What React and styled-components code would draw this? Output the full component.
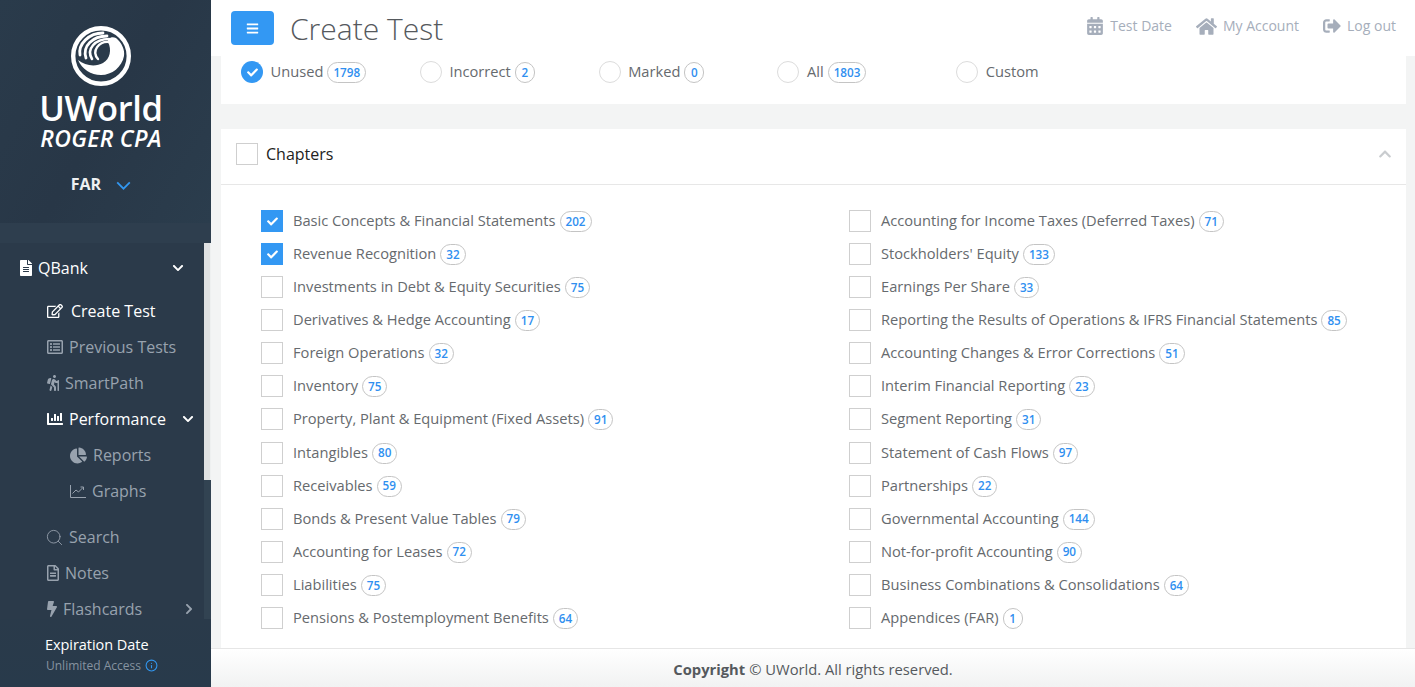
import React from "react";
import styled, { createGlobalStyle } from "styled-components";
import { FaFileAlt, FaRegEdit, FaRegListAlt, FaHiking, FaChartBar, FaChartPie, FaRegFileAlt, FaBolt, FaChevronDown, FaChevronRight, FaChevronUp, FaCalendarAlt, FaHome, FaSignOutAlt, FaCheck, FaBars } from "react-icons/fa";
import { Search, Info } from "lucide-react";

const Global = createGlobalStyle`
  html, body { margin: 0; padding: 0; height: 100%; overflow: hidden; }
  body { font-family: "Open Sans", "Liberation Sans", sans-serif; background: #f3f4f4; }
  * { box-sizing: border-box; }
  svg.w10 { width: 10px; }
  svg.w12 { width: 12px; }
  svg.w16 { width: 16px; }
`;

const Page = styled.div`display: flex; width: 1415px; height: 687px; overflow: hidden;`;

const Sidebar = styled.aside`
  width: 211px; flex: none; display: flex; flex-direction: column;
  background: linear-gradient(155deg, #2a3a4a 0%, #2b3b4b 60%, #293848 100%);
`;
const Brand = styled.div`
  height: 223px; flex: none; display: flex; flex-direction: column; align-items: center; padding: 26px 9px 0 0;
  background: linear-gradient(120deg, #2a3b4b 0%, #283747 50%, #2b3d4d 100%);
`;
const LogoName = styled.div`
  margin-top: 3px; color: #fff; font-size: 34.5px; font-weight: 600; line-height: 38px; letter-spacing: -0.3px; white-space: nowrap;
`;
const LogoSub = styled.div`
  color: #fff; font-size: 23px; font-weight: 600; font-style: italic; line-height: 22px; letter-spacing: 0.3px; white-space: nowrap;
`;
const Course = styled.div`
  margin-top: 24px; display: flex; align-items: center; gap: 15px; color: #eef0f2; font-size: 16px; font-weight: 700; line-height: 22px;
  svg { color: #3297f0; margin-top: 2px; }
`;
const Band = styled.div`height: 20px; flex: none; background: #2e3e4e;`;
const NavArea = styled.div`height: 376px; flex: none; display: flex; overflow: hidden;`;
const Nav = styled.nav`width: 204px; flex: none; padding-top: 7px; background: #2b3a4a;`;
const Scroll = styled.div`width: 7px; flex: none; background: #324352; display: flex; flex-direction: column;`;
const Thumb = styled.div`width: 7px; height: 237px; background: #dfe1e3; border-right: 1px solid #eef0f0;`;
const TopItem = styled.div`
  height: 36px; display: flex; align-items: center; padding-left: 20px; color: #fff; font-size: 16px; position: relative;
  svg.lead { margin-right: 6px; }
`;
const Item = styled.div`
  height: 36px; display: flex; align-items: center; padding-left: ${p => p.$indent || 47}px; font-size: 16px;
  color: ${p => (p.$active ? "#fff" : "#98a2ae")}; position: relative; margin-top: ${p => p.$gap || 0}px;
  svg.lead { margin-right: ${p => p.$iconGap ?? 6}px; flex: none; }
  svg.nudge { margin-left: -2px; }
`;
const Caret = styled.span`
  position: absolute; left: ${p => p.$left}px; top: 50%; transform: translateY(-50%); display: flex; color: ${p => p.$color || "#fff"};
`;
const Expire = styled.div`
  flex: 1; padding: 16px 0 0 45px; background: linear-gradient(180deg, #2a3a4a, #283a4b);
`;
const ExpireTitle = styled.div`color: #fff; font-size: 14.5px; line-height: 20px; letter-spacing: -0.05px;`;
const ExpireSub = styled.div`
  display: flex; align-items: center; gap: 4px; color: #8693a0; font-size: 12px; line-height: 21px; padding-left: 1px;
  svg { color: #3297f0; }
`;

const Main = styled.div`flex: 1; display: flex; flex-direction: column; min-width: 0;`;
const Header = styled.header`
  height: 56px; flex: none; background: #fff; display: flex; align-items: center; padding: 2px 19px 0 20px;
`;
const MenuButton = styled.button`
  width: 43px; height: 34px; border: 0; border-radius: 4px; background: #3398f3; color: #fff; display: flex; align-items: center; justify-content: center; padding: 0; margin-top: -2px;
`;
const Title = styled.h1`
  margin: 0 0 0 16px; font-size: 30px; font-weight: 300; color: #55595d; line-height: 40px;
`;
const HeaderLinks = styled.div`margin-left: auto; display: flex; align-items: center; gap: 24px; margin-top: -6px;`;
const HeaderLink = styled.a`
  display: flex; align-items: center; gap: ${p => p.$gap || 6}px; color: #a6aebb; font-size: 14px; line-height: 20px;
`;
const Content = styled.main`flex: 1; padding: 0 9px 0 10px; display: flex; flex-direction: column; overflow: hidden;`;
const ModeCard = styled.section`
  height: 48px; flex: none; background: #fff; display: flex; padding: 5px 0 0 20px;
`;
const Mode = styled.label`
  width: 178.8px; flex: none; display: flex; align-items: flex-start; color: #666a6e; font-size: 14.67px; line-height: 20px;
`;
const Radio = styled.span`
  width: 22px; height: 22px; border-radius: 50%; flex: none; margin-right: 7.6px; display: flex; align-items: center; justify-content: center; color: #fff;
  background: ${p => (p.$on ? "#3398f3" : "#fff")}; border: ${p => (p.$on ? "0" : "1px solid #dcdcdc")};
`;
const Count = styled.span`
  display: inline-flex; align-items: center; justify-content: center; height: 21px; min-width: 20px; padding: 0 5px; margin-left: 4px; margin-top: 1px;
  border: 1px solid #c4c4c4; border-radius: 11px; color: #2f8ff0; font-size: 11.7px; font-weight: 600; line-height: 1; background: #fff; flex: none;
`;
const ChapterCard = styled.section`margin-top: 25px; flex: 1; background: #fff; display: flex; flex-direction: column;`;
const CardHead = styled.div`
  height: 56px; flex: none; border-bottom: 1px solid #e7e7e7; display: flex; align-items: center; padding: 0 14px 5px 15px; color: #222; font-size: 16px;
`;
const Box = styled.span`
  width: 22px; height: 22px; flex: none; display: flex; align-items: center; justify-content: center; color: #fff;
  background: ${p => (p.$on ? "#3398f3" : "#fff")}; border: ${p => (p.$on ? "0" : "1px solid #cfcfcf")};
`;
const HeadLabel = styled.span`margin-left: 8px; flex: 1;`;
const Grid = styled.div`
  display: grid; grid-template-columns: 588px 1fr; grid-auto-rows: 33.09px; padding: 25px 0 0 40px;
`;
const Row = styled.label`display: flex; align-items: flex-start; color: #666a6e; font-size: 14.67px; line-height: 20px;`;
const RowText = styled.span`margin-left: 10px; white-space: nowrap;`;
const Footer = styled.footer`
  height: 39px; flex: none; border-top: 1px solid #e6e6e6; background: linear-gradient(180deg, #fff, #f1f2f2);
  display: flex; align-items: center; justify-content: center; color: #55595d; font-size: 14.75px; padding-top: 2px;
  strong { font-weight: 700; margin-right: 4px; }
`;

const Logo = () => (
  <svg width="60" height="60" viewBox="0 0 60 60">
    <circle cx="30" cy="30" r="27.8" fill="#2a3a4a" stroke="#fff" strokeWidth="4.4" />
    <path d="M7 34 C14 40 25 41 32 37 C39 33 41 24 37 16 C36 13 40 10 45 12 C51 17 54 24 53 30 C51 41 41 49 30 49 C20 49 11 43 7 34 Z" fill="#fff" />
    <g fill="none" stroke="#fff" strokeLinecap="round">
      <path d="M9 29 C7 18 18 7 32 7" strokeWidth="2.8" />
      <path d="M15 32 C11 20 22 10 36 10" strokeWidth="2.8" />
      <path d="M21 33 C15 23 24 13 38 13" strokeWidth="2.6" />
      <path d="M27 33 C20 25 28 15 38 16" strokeWidth="2.4" />
    </g>
  </svg>
);

const GraphIcon = () => (
  <svg className="lead" width="16" height="14" viewBox="0 0 16 14" fill="none" stroke="currentColor" strokeWidth="1">
    <path d="M.5 1v12.5H16" />
    <path d="M2.5 9.5 6 6l2.5 2L13 3.5" />
    <path d="M10.5 3H13.5V6" />
  </svg>
);

const Check = ({ size = 11 }) => <FaCheck size={size} />;

const modes = [
  { name: "Unused", count: 1798, on: true },
  { name: "Incorrect", count: 2 },
  { name: "Marked", count: 0 },
  { name: "All", count: 1803 },
  { name: "Custom" },
];

const chapters = [
  ["Basic Concepts & Financial Statements", 202, true],
  ["Accounting for Income Taxes (Deferred Taxes)", 71],
  ["Revenue Recognition", 32, true],
  ["Stockholders' Equity", 133],
  ["Investments in Debt & Equity Securities", 75],
  ["Earnings Per Share", 33],
  ["Derivatives & Hedge Accounting", 17],
  ["Reporting the Results of Operations & IFRS Financial Statements", 85],
  ["Foreign Operations", 32],
  ["Accounting Changes & Error Corrections", 51],
  ["Inventory", 75],
  ["Interim Financial Reporting", 23],
  ["Property, Plant & Equipment (Fixed Assets)", 91],
  ["Segment Reporting", 31],
  ["Intangibles", 80],
  ["Statement of Cash Flows", 97],
  ["Receivables", 59],
  ["Partnerships", 22],
  ["Bonds & Present Value Tables", 79],
  ["Governmental Accounting", 144],
  ["Accounting for Leases", 72],
  ["Not-for-profit Accounting", 90],
  ["Liabilities", 75],
  ["Business Combinations & Consolidations", 64],
  ["Pensions & Postemployment Benefits", 64],
  ["Appendices (FAR)", 1],
];

export default function App() {
  return (
    <Page>
      <Global />
      <Sidebar>
        <Brand>
          <Logo />
          <LogoName>UWorld</LogoName>
          <LogoSub>ROGER CPA</LogoSub>
          <Course>
            FAR
            <svg width="15" height="9" viewBox="0 0 16 10" fill="none" stroke="currentColor" strokeWidth="2"><path d="M1 1.5 8 8.5 15 1.5" /></svg>
          </Course>
        </Brand>
        <Band />
        <NavArea>
          <Nav>
            <TopItem>
              <FaFileAlt className="lead w12" size={16} />
              QBank
              <Caret $left={172}><FaChevronDown size={12} /></Caret>
            </TopItem>
            <Item $active $iconGap={8} $gap={7}><FaRegEdit className="lead" size={16} />Create Test</Item>
            <Item $iconGap={6}><FaRegListAlt className="lead" size={16} />Previous Tests</Item>
            <Item $iconGap={6}><FaHiking className="lead w12" size={16} />SmartPath</Item>
            <Item $active $iconGap={6}>
              <FaChartBar className="lead" size={16} />Performance
              <Caret $left={182}><FaChevronDown size={12} /></Caret>
            </Item>
            <Item $indent={70} $iconGap={6}><FaChartPie className="lead" size={17} />Reports</Item>
            <Item $indent={70} $iconGap={6}><GraphIcon />Graphs</Item>
            <Item $iconGap={5} $gap={10}><Search className="lead nudge" size={19} strokeWidth={1.1} />Search</Item>
            <Item $iconGap={6}><FaRegFileAlt className="lead w12" size={16} />Notes</Item>
            <Item $iconGap={6}>
              <FaBolt className="lead w10" size={16} />Flashcards
              <Caret $left={183} $color="#98a2ae"><FaChevronRight size={12} /></Caret>
            </Item>
          </Nav>
          <Scroll><Thumb /></Scroll>
        </NavArea>
        <Expire>
          <ExpireTitle>Expiration Date</ExpireTitle>
          <ExpireSub>Unlimited Access <Info size={13} /></ExpireSub>
        </Expire>
      </Sidebar>
      <Main>
        <Header>
          <MenuButton aria-label="Menu"><FaBars size={13} /></MenuButton>
          <Title>Create Test</Title>
          <HeaderLinks>
            <HeaderLink $gap={7}><FaCalendarAlt className="w16" size={18} />Test Date</HeaderLink>
            <HeaderLink><FaHome size={21} />My Account</HeaderLink>
            <HeaderLink $gap={6}><FaSignOutAlt size={18} />Log out</HeaderLink>
          </HeaderLinks>
        </Header>
        <Content>
          <ModeCard>
            {modes.map(m => (
              <Mode key={m.name}>
                <Radio $on={m.on}>{m.on && <Check />}</Radio>
                {m.name}
                {m.count !== undefined && <Count>{m.count}</Count>}
              </Mode>
            ))}
          </ModeCard>
          <ChapterCard>
            <CardHead>
              <Box />
              <HeadLabel>Chapters</HeadLabel>
              <FaChevronUp size={14} color="#c9cccf" />
            </CardHead>
            <Grid>
              {chapters.map(([name, count, on]) => (
                <Row key={name}>
                  <Box $on={on}>{on && <Check />}</Box>
                  <RowText>{name}</RowText>
                  <Count>{count}</Count>
                </Row>
              ))}
            </Grid>
          </ChapterCard>
        </Content>
        <Footer><strong>Copyright</strong> © UWorld. All rights reserved.</Footer>
      </Main>
    </Page>
  );
}
